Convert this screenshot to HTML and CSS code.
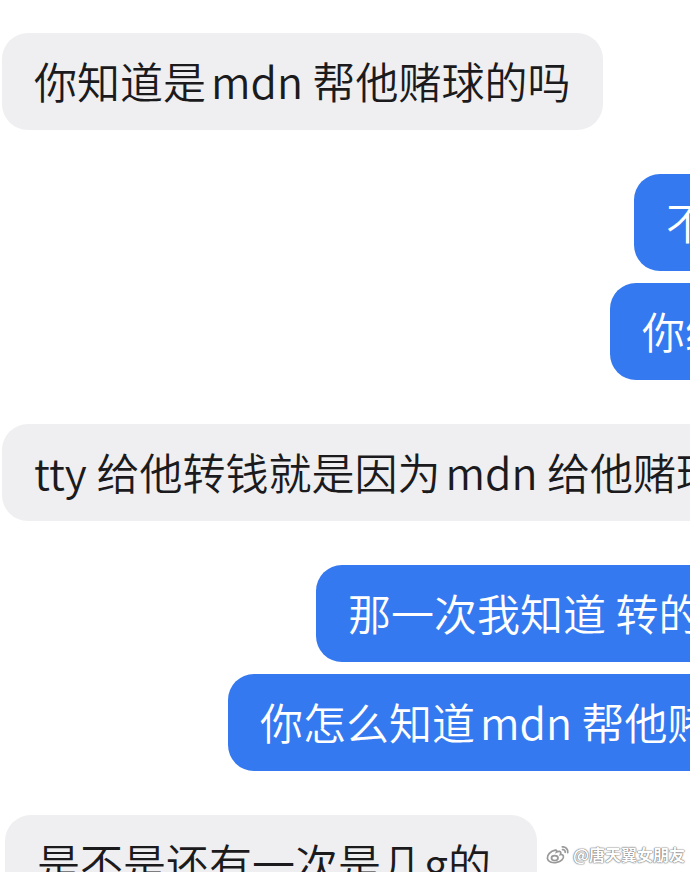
FILE: index.html
```html
<!DOCTYPE html>
<html lang="zh-CN">
<head>
    <meta charset="UTF-8">
    <meta name="viewport" content="width=device-width, initial-scale=1.0">
    <title>聊天记录</title>
    <link rel="stylesheet" href="styles.css">
</head>
<body>
    <div class="chat">
        <div class="msg in">
            <div class="bubble"><span class="text">你知道是<span class="en">mdn</span> 帮他赌球的吗</span></div>
        </div>

        <div class="group">
            <div class="msg out out-1">
                <div class="bubble"><span class="text">不知道</span></div>
            </div>
            <div class="msg out out-2">
                <div class="bubble"><span class="text">你给他</span></div>
            </div>
        </div>

        <div class="msg in">
            <div class="bubble"><span class="text">tty 给他转钱就是因为<span class="en">mdn</span> 给他赌球</span></div>
        </div>

        <div class="group">
            <div class="msg out out-3">
                <div class="bubble"><span class="text">那一次我知道 转的</span></div>
            </div>
            <div class="msg out out-4">
                <div class="bubble"><span class="text">你怎么知道<span class="en">mdn</span> 帮他赌球</span></div>
            </div>
        </div>

        <div class="msg in last">
            <div class="bubble"><span class="text">是不是还有一次是几g的</span></div>
        </div>
    </div>

    <!-- 水印 -->
    <div class="watermark">
        <svg class="weibo-logo" viewBox="0 0 24 20" fill="none" stroke="currentColor" stroke-width="1.6" stroke-linecap="round">
            <path d="M9.5 6.5C5 7.5 1.8 11 2.2 14c.4 3 4.3 4.6 8.5 3.8 4.3-.8 6.8-3.5 6.3-5.7-.3-1.5-1.8-1.8-2.8-1.6.6-1.4.5-2.6-.6-2.9-1-.3-2.3.2-3 .6.3-1.2.2-2-1.1-1.7z"></path>
            <ellipse cx="9" cy="13.8" rx="3" ry="2.2"></ellipse>
            <path d="M16 3.5a4.5 4.5 0 0 1 5 5.2"></path>
            <path d="M16.2 6a2 2 0 0 1 2.4 2.4"></path>
        </svg>
        <span>@唐天翼女朋友</span>
    </div>
</body>
</html>
```

FILE: styles.css
```css
html, body {
    margin: 0;
    padding: 0;
}

body {
    width: 690px;
    height: 872px;
    overflow: hidden;
    position: relative;
    background-color: #fff;
    font-family: "Noto Sans CJK SC", "Noto Sans", sans-serif;
}

.chat {
    display: flex;
    flex-direction: column;
    gap: 44px;
    padding-top: 33px;
}

.group {
    display: flex;
    flex-direction: column;
    gap: 12px;
}

.msg {
    display: flex;
}

.bubble {
    box-sizing: border-box;
    height: 97px;
    display: flex;
    align-items: center;
    padding: 0 32px 4px;
    border-radius: 26px;
    font-size: 43px;
    font-weight: 350;
    white-space: nowrap;
    flex-shrink: 0;
}

.bubble .en {
    margin-left: 5px;
}

.msg.in {
    padding-left: 2px;
}

.msg.in .bubble {
    background-color: #efeff1;
    color: #1b1b1d;
}

.msg.in.last {
    padding-left: 5px;
}

.msg.in.last .bubble {
    padding-right: 46px;
}

.msg.out .bubble {
    background-color: #3479f0;
    color: #fff;
    padding-right: 200px;
}

.out-1 {
    padding-left: 634px;
}

.out-2 {
    padding-left: 610px;
}

.out-3 {
    padding-left: 316px;
}

.out-4 {
    padding-left: 228px;
}

.watermark {
    position: absolute;
    right: 5px;
    bottom: 6px;
    display: flex;
    align-items: center;
    gap: 2px;
    color: #fff;
    font-size: 16px;
    font-weight: 700;
    font-family: "Noto Sans CJK SC", sans-serif;
    text-shadow: 0 0 1px #666, 0 0 1px #777, 0 0 2px #999;
}

.weibo-logo {
    width: 26px;
    height: 22px;
    color: #999;
}
```
